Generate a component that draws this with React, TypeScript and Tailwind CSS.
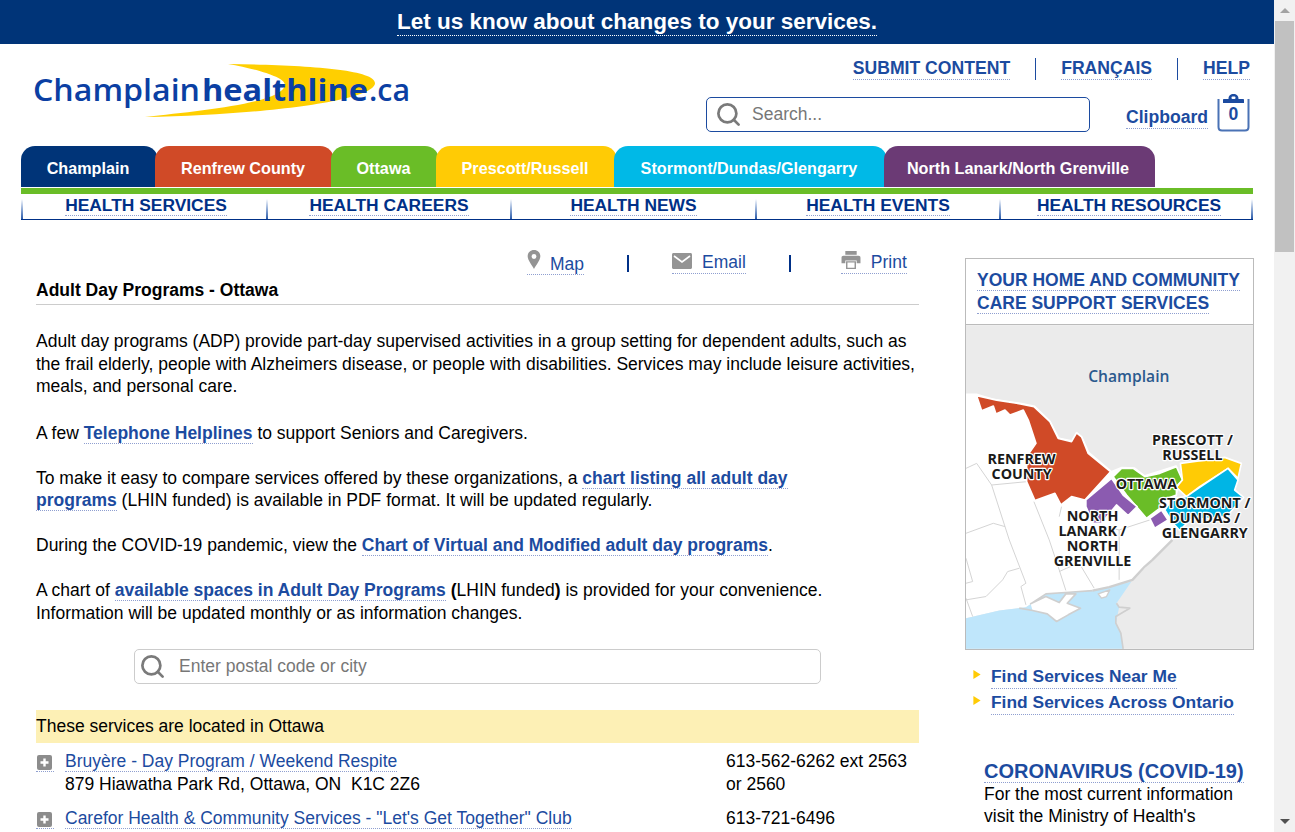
import React from "react";
import { Search } from "lucide-react";

const tabs = [
  { label: "Champlain", width: "w-[137px]", bg: "bg-[#003478]", first: true },
  { label: "Renfrew County", width: "w-[179px]", bg: "bg-[#d04a27]" },
  { label: "Ottawa", width: "w-[108px]", bg: "bg-[#6abd27]" },
  { label: "Prescott/Russell", width: "w-[181px]", bg: "bg-[#ffcb05]" },
  { label: "Stormont/Dundas/Glengarry", width: "w-[273px]", bg: "bg-[#00b9e7]" },
  { label: "North Lanark/North Grenville", width: "w-[271px]", bg: "bg-[#6b3a75]" },
];

const navItems = [
  { label: "HEALTH SERVICES", width: "w-[243px] pl-[3px]" },
  { label: "HEALTH CAREERS", width: "w-[242px]" },
  { label: "HEALTH NEWS", width: "w-[243px]" },
  { label: "HEALTH EVENTS", width: "w-[242px]" },
  { label: "HEALTH RESOURCES", width: "w-[250px] pl-[6px]" },
];

const linkLine = "border-b border-dotted border-[#8f9fd0]";

const Logo = () => (
  <svg width="400" height="70" viewBox="0 0 400 70" className="block">
    <path d="M207 1 C280 2 354 6 354 20 C354 38 240 52 124 54 C180 48 262 40 264 22 C264 14 235 6 207 1 Z" fill="#ffcf00" />
    <g fontFamily="'Open Sans', sans-serif" fontSize="31" fill="#0b3fa3">
      <text x="12" y="38" fontWeight="600" textLength="167" lengthAdjust="spacingAndGlyphs">Champlain</text>
      <text x="181" y="38" fontWeight="700" textLength="166" lengthAdjust="spacingAndGlyphs">healthline</text>
      <text x="348" y="38" fontWeight="600" textLength="41" lengthAdjust="spacingAndGlyphs">.ca</text>
    </g>
  </svg>
);

const ClipboardIcon = () => (
  <div className="relative w-[33px] h-[38px]">
    <svg width="33" height="38" viewBox="0 0 33 38" className="block">
      <path d="M1.5 5 V33 C1.5 35.5 2.5 36.5 5 36.5 H28 C30.5 36.5 31.5 35.5 31.5 33 V5" fill="none" stroke="#4a72b5" strokeWidth="2" />
      <path d="M6 9 V6 C6 5.4 6.4 5 7 5 H11.5 C11.5 1.5 13.5 0 16.5 0 C19.5 0 21.5 1.5 21.5 5 H26 C26.6 5 27 5.4 27 6 V9 Z" fill="#1c4ba0" />
      <rect x="14.5" y="2.5" width="4" height="2.5" rx="1" fill="#fff" />
    </svg>
    <span className="absolute left-0 right-0 top-[10px] text-center text-[17.6px] font-bold leading-[20px] text-[#1c4ba0]">0</span>
  </div>
);

const PinIcon = () => (
  <svg width="14" height="19" viewBox="0 0 15 21" className="block -mt-[1px]">
    <path d="M7.5 0 C3.4 0 0.5 3 0.5 7 C0.5 11.5 5.5 17 7.5 21 C9.5 17 14.5 11.5 14.5 7 C14.5 3 11.6 0 7.5 0 Z M7.5 4.5 A2.7 2.7 0 1 1 7.5 9.9 A2.7 2.7 0 1 1 7.5 4.5 Z" fill="#949494" fillRule="evenodd" />
  </svg>
);

const MailIcon = () => (
  <svg width="20" height="16" viewBox="0 0 20 16" className="block mt-[2px]">
    <path d="M1.5 0 H18.5 C19.3 0 20 .7 20 1.5 V14.5 C20 15.3 19.3 16 18.5 16 H1.5 C.7 16 0 15.3 0 14.5 V1.5 C0 .7 .7 0 1.5 0 Z" fill="#949494" />
    <path d="M2 3 L10 9 L18 3" fill="none" stroke="#fff" strokeWidth="1.6" />
  </svg>
);

const PrinterIcon = () => (
  <svg width="20" height="18" viewBox="0 0 20 19" className="block">
    <path d="M4 0 H16 V4 H4 Z" fill="#949494" />
    <path d="M2 5 H18 C19.2 5 20 5.8 20 7 V13 H16 V10 H4 V13 H0 V7 C0 5.8 .8 5 2 5 Z" fill="#949494" />
    <path d="M5.5 11.5 H14.5 V18.5 H5.5 Z" fill="#fff" stroke="#949494" strokeWidth="1.5" />
  </svg>
);

const PlusIcon = () => (
  <svg width="15" height="15" viewBox="0 0 15 15" className="block ml-[1px]">
    <rect width="15" height="15" rx="2" fill="#8c8c8c" />
    <path d="M7.5 3.5 V11.5 M3.5 7.5 H11.5" stroke="#fff" strokeWidth="2.4" />
  </svg>
);

const RegionLabel = ({ x, y, children }: { x: number; y: number; children: string }) => (
  <text
    x={x}
    y={y}
    textAnchor="middle"
    fontFamily="'Open Sans', sans-serif"
    fontWeight="700"
    fontSize="43"
    fill="#1a1a1a"
    stroke="#fff"
    strokeWidth="7"
    strokeLinejoin="round"
    paintOrder="stroke"
  >
    {children}
  </text>
);

const ChamplainMap = () => (
  <svg viewBox="18 225 862 972" width="287" height="324" className="block">
    <rect x="18" y="225" width="862" height="972" fill="#ebebeb" />
    <path d="M18 430 L50 430 L100 445 L185 458 L225 466 L272 512 L298 562 L335 570 L350 545 L368 560 L388 605 L455 662 L485 650 L525 652 L555 675 L650 645 L668 690 L650 735 L640 868 L578 930 L555 955 L518 990 L448 1012 L398 1022 L328 1027 L258 1032 L198 1072 L118 1082 L18 1105 Z" fill="#fff" />
    <path d="M18 1105 L118 1082 L198 1072 L258 1032 L328 1027 L398 1022 L448 1012 L515 995 L470 1060 L478 1072 L468 1120 L483 1150 L490 1197 L18 1197 Z" fill="#bfe6fb" />
    <path d="M212 1062 L258 1040 L298 1058 L318 1032 L348 1032 L322 1060 L362 1075 L325 1095 L290 1115 L262 1092 L218 1082 Z" fill="#fff" />
    <path d="M415 1032 L450 1020 L440 1040 L425 1045 Z" fill="#fff" />
    <g fill="none" stroke="#cfcfcf" strokeLinejoin="round">
      <path d="M638 870 L578 930 L555 950 L518 990 L448 1012 L398 1022" strokeWidth="7" />
      <path d="M398 1022 L328 1027 L258 1032 L212 1062 L258 1040 L298 1058 L318 1032 L348 1032 L322 1060 L362 1075 L325 1095 L290 1115 L262 1092 L218 1082 L178 1075" strokeWidth="5" />
      <path d="M470 1060 L478 1072 L510 1075 L468 1100 L468 1120 L483 1150 L490 1197" strokeWidth="5" />
      <path d="M415 1032 L450 1020 L440 1040 L425 1045 Z" strokeWidth="4" />
    </g>
    <g fill="none" stroke="#d4d4d4" strokeWidth="3">
      <path d="M18 655 L50 640 L95 705 L200 695" />
      <path d="M95 705 L148 870 L198 1000 L183 1010 L198 1065" />
      <path d="M18 850 L100 820 L135 830" />
      <path d="M178 955 L143 965 L128 990 L78 1040 L18 1050" />
      <path d="M18 925 L38 995 L18 1000" />
      <path d="M18 1045 L38 1100" />
      <path d="M222 755 L268 870 L298 960 L318 1022" />
      <path d="M298 965 L320 955 L358 940 L403 1015" />
      <path d="M305 770 L298 800" />
      <path d="M430 830 L478 840 L478 990" />
      <path d="M478 840 L570 810" />
    </g>
    <g stroke="#fff" strokeWidth="5" strokeLinejoin="round">
      <path d="M50 437 L110 450 L185 462 L222 470 L270 515 L295 565 L335 575 L350 548 L365 560 L385 610 L452 665 L375 750 L335 740 L303 765 L285 730 L225 752 L200 695 L200 620 L228 580 L205 510 L190 480 L150 495 L135 480 L108 492 L100 468 L65 482 Z" fill="#d04a27" />
      <path d="M460 680 L485 655 L520 655 L555 680 L600 670 L650 650 L668 690 L650 710 L650 735 L610 750 L600 775 L560 805 L500 735 Z" fill="#6abd27" />
      <path d="M378 750 L455 685 L490 735 L532 770 L505 797 L470 765 L425 820 L400 820 L378 770 Z" fill="#8b5bb0" />
      <path d="M570 805 L605 780 L625 810 L585 835 Z" fill="#8b5bb0" />
      <path d="M662 640 L795 622 L845 640 L835 685 L805 655 L720 710 L680 740 L650 712 L668 690 Z" fill="#ffcb05" />
      <path d="M805 655 L835 690 L825 720 L852 742 L800 800 L690 810 L660 842 L640 820 L615 780 L640 745 L680 740 L720 712 Z" fill="#00b5e5" />
    </g>
    <text x="507" y="396" textAnchor="middle" fontFamily="'Open Sans', sans-serif" fontWeight="600" fontSize="47" fill="#2b5a8e">Champlain</text>
    <RegionLabel x={185} y={642}>RENFREW</RegionLabel>
    <RegionLabel x={185} y={687}>COUNTY</RegionLabel>
    <RegionLabel x={560} y={716}>OTTAWA</RegionLabel>
    <RegionLabel x={698} y={585}>PRESCOTT /</RegionLabel>
    <RegionLabel x={698} y={630}>RUSSELL</RegionLabel>
    <RegionLabel x={735} y={775}>STORMONT /</RegionLabel>
    <RegionLabel x={735} y={820}>DUNDAS /</RegionLabel>
    <RegionLabel x={735} y={865}>GLENGARRY</RegionLabel>
    <RegionLabel x={398} y={812}>NORTH</RegionLabel>
    <RegionLabel x={398} y={857}>LANARK /</RegionLabel>
    <RegionLabel x={398} y={902}>NORTH</RegionLabel>
    <RegionLabel x={398} y={947}>GRENVILLE</RegionLabel>
  </svg>
);

const Bullet = () => (
  <svg width="8" height="9" viewBox="0 0 8 10" className="block">
    <path d="M0 0 L8 5 L0 10 Z" fill="#ffcb05" />
  </svg>
);

const Scrollbar = () => (
  <div className="w-[21px] h-[832px] shrink-0 flex flex-col items-center bg-[#f1f1f1]">
    <div className="h-[21px] flex items-center justify-center">
      <div className="w-0 h-0 border-x-[5px] border-x-transparent border-b-[5px] border-b-[#a3a3a3]" />
    </div>
    <div className="w-[19px] h-[231px] bg-[#c1c1c1]" />
    <div className="flex-1" />
    <div className="h-[21px] flex items-center justify-center">
      <div className="w-0 h-0 border-x-[5px] border-x-transparent border-t-[5px] border-t-[#505050]" />
    </div>
  </div>
);

const Divider = () => <div className="w-[2px] h-full shrink-0 bg-gradient-to-b from-white from-20% to-[#2a5aa8]" />;

const App = () => {
  return (
    <div className="flex w-[1295px] h-[832px] overflow-hidden bg-white text-black font-['Liberation_Sans',Arial,sans-serif] text-[17.5px] leading-[22.5px]">
      <div className="w-[1274px] shrink-0">
        <div className="h-[44px] bg-[#003478] flex justify-center">
          <a className="mt-[6px] h-[30px] text-[22.5px] leading-[31px] font-bold text-white border-b border-dotted border-white">
            Let us know about changes to your services.
          </a>
        </div>

        <div className="flex h-[102px] pl-[21px]">
          <div className="pt-[19px]">
            <Logo />
          </div>
          <div className="ml-auto w-[568px] pr-[24px] flex flex-col items-end pt-[14px]">
            <div className="flex items-center h-[22px] text-[#1c4ba0] font-bold text-[17.6px]">
              <a className={`${linkLine} leading-[21px]`}>SUBMIT CONTENT</a>
              <span className="w-px h-[22px] bg-[#1c4ba0] mx-[25px]" />
              <a className={`${linkLine} leading-[21px]`}>FRANÇAIS</a>
              <span className="w-px h-[22px] bg-[#1c4ba0] mx-[25px]" />
              <a className={`${linkLine} leading-[21px]`}>HELP</a>
            </div>
            <div className="flex w-full items-start mt-[15px]">
              <div className="w-[384px] h-[35px] mt-[2px] flex items-center pl-[8px] border border-[#1c4ba0] rounded-[5px]">
                <Search size={27} strokeWidth={2.4} className="text-[#7a7a7a]" />
                <input placeholder="Search..." className="ml-[10px] w-[300px] outline-none placeholder:text-[#777]" />
              </div>
              <a className={`${linkLine} ml-[36px] mt-[12px] text-[#1c4ba0] font-bold text-[17.6px] leading-[21px]`}>Clipboard</a>
              <div className="ml-auto -mt-[1px]">
                <ClipboardIcon />
              </div>
            </div>
          </div>
        </div>

        <div className="pl-[21px]">
          <div className="flex h-[41px]">
            {tabs.map((tab) => (
              <div
                key={tab.label}
                className={`${tab.width} ${tab.bg} ${tab.first ? "" : "-ml-[3px]"} rounded-t-[14px] pt-[3px] pr-[3px] flex items-center justify-center text-white font-bold text-[16.2px]`}
              >
                {tab.label}
              </div>
            ))}
          </div>
          <div className="w-[1232px] h-[6px] mt-[1px] bg-[#6abd27]" />
          <div className="w-[1232px] h-[26px] flex border-b border-[#003087]">
            <Divider />
            {navItems.map((item) => (
              <React.Fragment key={item.label}>
                <div className={`${item.width} flex justify-center`}>
                  <a className="h-[22px] text-[#003087] font-bold text-[17.4px] leading-[22px] border-b border-dotted border-[#8f9fd0]">{item.label}</a>
                </div>
                <Divider />
              </React.Fragment>
            ))}
          </div>
        </div>

        <div className="flex pl-[36px] pt-[30px]">
          <div className="w-[883px] shrink-0">
            <div className="h-[27px] flex text-[#1c4ba0]">
              <a className={`${linkLine} ml-[491px] flex h-[24px] items-start gap-[9px] mt-[1px]`}>
                <PinIcon />
                <span className="mt-[2px]">Map</span>
              </a>
              <span className="ml-[43px] mt-[5px] w-[2px] h-[17px] bg-[#003087]" />
              <a className={`${linkLine} ml-[43px] flex h-[23px] items-start gap-[10px] mt-[1px]`}>
                <MailIcon />
                <span>Email</span>
              </a>
              <span className="ml-[43px] mt-[5px] w-[2px] h-[17px] bg-[#003087]" />
              <a className={`${linkLine} ml-[50px] flex h-[23px] items-start gap-[10px] mt-[1px]`}>
                <PrinterIcon />
                <span>Print</span>
              </a>
            </div>
            <h1 className="h-[28px] pt-[2px] font-bold border-b border-[#cccccc]">Adult Day Programs - Ottawa</h1>

            <div className="pt-[25px]">
              <p className="mb-[24px]">
                Adult day programs (ADP) provide part-day supervised activities in a group setting for dependent adults, such as the frail elderly, people with Alzheimers disease, or people with disabilities. Services may include leisure activities, meals, and personal care.
              </p>
              <p className="mb-[22.5px]">
                A few <a className={`${linkLine} font-bold text-[#1c4ba0]`}>Telephone Helplines</a> to support Seniors and Caregivers.
              </p>
              <p className="mb-[22.5px]">
                To make it easy to compare services offered by these organizations, a <a className={`${linkLine} font-bold text-[#1c4ba0]`}>chart listing all adult day<br />programs</a> (LHIN funded) is available in PDF format. It will be updated regularly.
              </p>
              <p className="mb-[22.5px]">
                During the COVID-19 pandemic, view the <a className={`${linkLine} font-bold text-[#1c4ba0]`}>Chart of Virtual and Modified adult day programs</a>.
              </p>
              <p>
                A chart of <a className={`${linkLine} font-bold text-[#1c4ba0]`}>available spaces in Adult Day Programs</a> <b>(</b>LHIN funded<b>)</b> is provided for your convenience.<br />
                Information will be updated monthly or as information changes.
              </p>
            </div>

            <div className="w-[687px] h-[35px] ml-[98px] mt-[25px] flex items-center pl-[4px] border border-[#cccccc] rounded-[5px]">
              <Search size={27} strokeWidth={2.4} className="text-[#7a7a7a]" />
              <input placeholder="Enter postal code or city" className="ml-[13px] w-[500px] outline-none placeholder:text-[#777]" />
            </div>

            <div className="h-[33px] mt-[26px] flex items-center bg-[#fdf0b5]">These services are located in Ottawa</div>

            <div className="flex mt-[7px]">
              <div className="w-[29px] shrink-0">
                <div className={`${linkLine} w-[18px] pt-[5px] pb-[1px]`}><PlusIcon /></div>
              </div>
              <div className="w-[661px] shrink-0">
                <a className={`${linkLine} text-[#1c4ba0]`}>Bruyère - Day Program / Weekend Respite</a>
                <div>879 Hiawatha Park Rd, Ottawa, ON&nbsp; K1C 2Z6</div>
              </div>
              <div>613-562-6262 ext 2563<br />or 2560</div>
            </div>
            <div className="flex mt-[12px]">
              <div className="w-[29px] shrink-0">
                <div className={`${linkLine} w-[18px] pt-[5px] pb-[1px]`}><PlusIcon /></div>
              </div>
              <div className="w-[661px] shrink-0">
                <a className={`${linkLine} text-[#1c4ba0]`}>Carefor Health &amp; Community Services - "Let's Get Together" Club</a>
              </div>
              <div>613-721-6496</div>
            </div>
          </div>

          <div className="w-[289px] ml-[46px] mt-[8px] shrink-0">
            <div className="border border-[#bbbbbb]">
              <div className="h-[66px] px-[11px] pt-[10px] border-b border-[#bbbbbb] text-[#1c4ba0] font-bold text-[17.5px] leading-[23px] whitespace-nowrap">
                <a className={linkLine}>YOUR HOME AND COMMUNITY</a>
                <br />
                <a className={linkLine}>CARE SUPPORT SERVICES</a>
              </div>
              <ChamplainMap />
            </div>
            <div className="mt-[15px] pl-[8px] text-[#1c4ba0] font-bold text-[17.4px]">
              <div className="flex items-start h-[26px]">
                <div className="pt-[5px] w-[18px] shrink-0"><Bullet /></div>
                <a className={linkLine}>Find Services Near Me</a>
              </div>
              <div className="flex items-start h-[26px]">
                <div className="pt-[5px] w-[18px] shrink-0"><Bullet /></div>
                <a className={linkLine}>Find Services Across Ontario</a>
              </div>
            </div>
            <div className="mt-[42px] pl-[19px]">
              <a className={`${linkLine} text-[#1c4ba0] font-bold text-[20px] leading-[24px]`}>CORONAVIRUS (COVID-19)</a>
              <div className="w-[260px] -mt-[1px]">For the most current information visit the Ministry of Health's</div>
            </div>
          </div>
        </div>
      </div>
      <Scrollbar />
    </div>
  );
};

export default App;
